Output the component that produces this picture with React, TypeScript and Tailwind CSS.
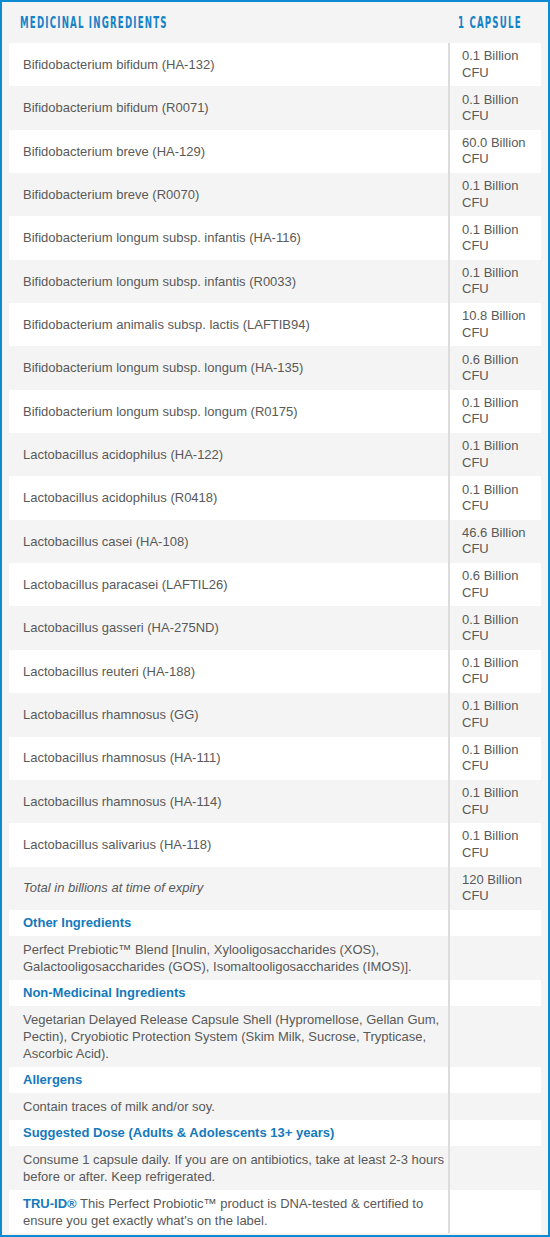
const strains: [string, string][] = [
  ["Bifidobacterium bifidum (HA-132)", "0.1 Billion CFU"],
  ["Bifidobacterium bifidum (R0071)", "0.1 Billion CFU"],
  ["Bifidobacterium breve (HA-129)", "60.0 Billion CFU"],
  ["Bifidobacterium breve (R0070)", "0.1 Billion CFU"],
  ["Bifidobacterium longum subsp. infantis (HA-116)", "0.1 Billion CFU"],
  ["Bifidobacterium longum subsp. infantis (R0033)", "0.1 Billion CFU"],
  ["Bifidobacterium animalis subsp. lactis (LAFTIB94)", "10.8 Billion CFU"],
  ["Bifidobacterium longum subsp. longum (HA-135)", "0.6 Billion CFU"],
  ["Bifidobacterium longum subsp. longum (R0175)", "0.1 Billion CFU"],
  ["Lactobacillus acidophilus (HA-122)", "0.1 Billion CFU"],
  ["Lactobacillus acidophilus (R0418)", "0.1 Billion CFU"],
  ["Lactobacillus casei (HA-108)", "46.6 Billion CFU"],
  ["Lactobacillus paracasei (LAFTIL26)", "0.6 Billion CFU"],
  ["Lactobacillus gasseri (HA-275ND)", "0.1 Billion CFU"],
  ["Lactobacillus reuteri (HA-188)", "0.1 Billion CFU"],
  ["Lactobacillus rhamnosus (GG)", "0.1 Billion CFU"],
  ["Lactobacillus rhamnosus (HA-111)", "0.1 Billion CFU"],
  ["Lactobacillus rhamnosus (HA-114)", "0.1 Billion CFU"],
  ["Lactobacillus salivarius (HA-118)", "0.1 Billion CFU"],
];

const extras: { title: string; text: string }[] = [
  {
    title: "Other Ingredients",
    text: "Perfect Prebiotic™ Blend [Inulin, Xylooligosaccharides (XOS), Galactooligosaccharides (GOS), Isomaltooligosaccharides (IMOS)].",
  },
  {
    title: "Non-Medicinal Ingredients",
    text: "Vegetarian Delayed Release Capsule Shell (Hypromellose, Gellan Gum, Pectin), Cryobiotic Protection System (Skim Milk, Sucrose, Trypticase, Ascorbic Acid).",
  },
  { title: "Allergens", text: "Contain traces of milk and/or soy." },
  {
    title: "Suggested Dose (Adults & Adolescents 13+ years)",
    text: "Consume 1 capsule daily. If you are on antibiotics, take at least 2-3 hours before or after. Keep refrigerated.",
  },
];

const Row = ({
  white,
  left,
  right,
  className,
}: {
  white: boolean;
  left: React.ReactNode;
  right?: React.ReactNode;
  className?: string;
}) => (
  <div className={`grid grid-cols-[1fr_93px] ${className ?? ""}`}>
    <div className={`flex items-center pl-[14px] pr-[1px] ${white ? "bg-white" : ""}`}>{left}</div>
    <div className={`flex items-center border-l-2 border-[#dcdcdc] pl-[12px] pr-2 ${white ? "bg-white" : ""}`}>
      {right}
    </div>
  </div>
);

// condensed caps heading: DejaVu Condensed squeezed further to look like the display face
const Caps = ({ children }: { children: string }) => (
  <span
    className="inline-block origin-left scale-x-[0.6] whitespace-nowrap text-[16px] font-bold tracking-[2px]"
    style={{ fontFamily: '"DejaVu Sans Condensed", sans-serif' }}
  >
    {children}
  </span>
);

export default function App() {
  let i = 0;
  return (
    <div
      className="w-[550px] border-2 border-[#0d8bd2] bg-[#f4f4f4] px-[7px] pb-[2px] text-[13px] text-[#595959]"
      style={{ fontFamily: '"Liberation Sans", Arial, sans-serif' }}
    >
      <div className="grid h-[41px] grid-cols-[1fr_93px] items-center text-[#1583c9]">
        <div className="pl-[11px]">
          <Caps>MEDICINAL INGREDIENTS</Caps>
        </div>
        <div className="pl-[10px]">
          <Caps>1 CAPSULE</Caps>
        </div>
      </div>

      {strains.map(([name, amount]) => (
        <Row
          key={name}
          white={i++ % 2 === 0}
          className="h-[43.35px]"
          left={<span>{name}</span>}
          right={<span className="leading-[16.5px]">{amount}</span>}
        />
      ))}
      <Row
        white={i++ % 2 === 0}
        className="h-[43.35px]"
        left={<span className="italic">Total in billions at time of expiry</span>}
        right={<span className="leading-[16.5px]">120 Billion CFU</span>}
      />

      {extras.map((e) => (
        <div key={e.title}>
          <Row
            white={i++ % 2 === 0}
            className="h-[26.5px]"
            left={<span className="font-bold text-[#1479bd]">{e.title}</span>}
          />
          <Row
            white={i++ % 2 === 0}
            left={<p className="py-[4.75px] leading-[17px]">{e.text}</p>}
          />
        </div>
      ))}
      <Row
        white={i++ % 2 === 0}
        left={
          <p className="py-[4.75px] leading-[17px]">
            <b className="text-[#1479bd]">TRU-ID®</b> This Perfect Probiotic™ product is DNA-tested &amp; certified
            to ensure you get exactly what's on the label.
          </p>
        }
      />
    </div>
  );
}
